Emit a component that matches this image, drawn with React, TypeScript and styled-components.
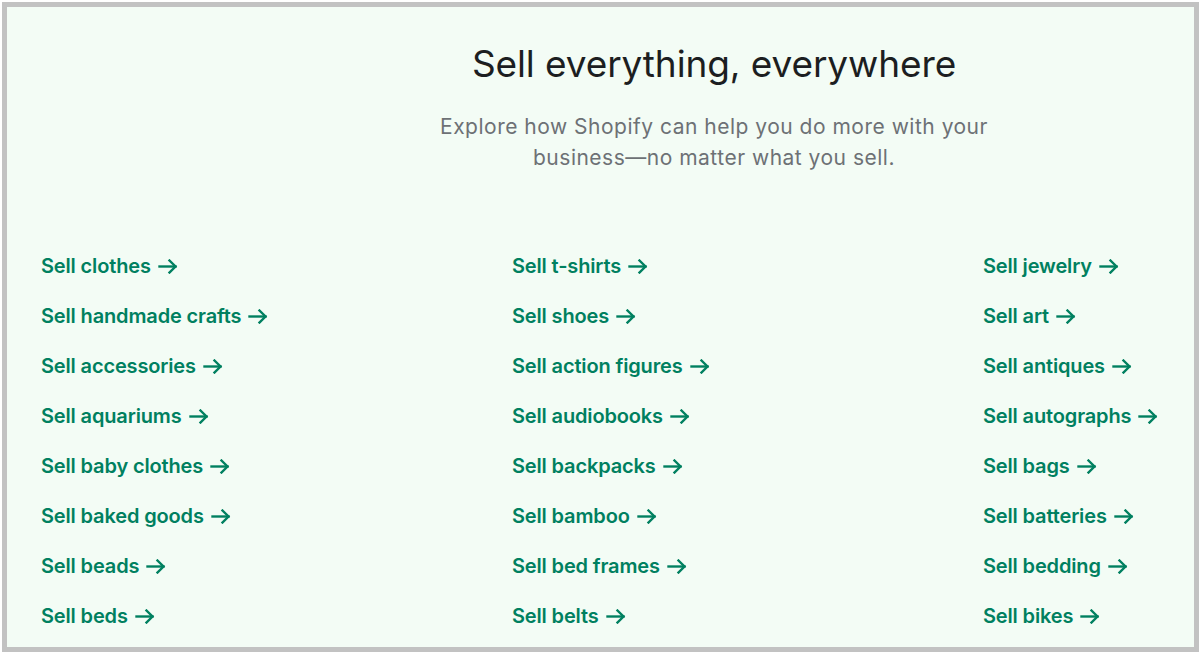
import styled, { createGlobalStyle } from "styled-components";

const GlobalStyle = createGlobalStyle`
    html, body {
        margin: 0;
        padding: 0;
        background: #ffffff;
    }
    body {
        padding: 2px 1px 1px 2px;
        font-family: Inter, "Noto Sans", "Liberation Sans", sans-serif;
    }
`

const columns: string[][] = [
    ['clothes', 'handmade crafts', 'accessories', 'aquariums', 'baby clothes', 'baked goods', 'beads', 'beds'],
    ['t-shirts', 'shoes', 'action figures', 'audiobooks', 'backpacks', 'bamboo', 'bed frames', 'belts'],
    ['jewelry', 'art', 'antiques', 'autographs', 'bags', 'batteries', 'bedding', 'bikes'],
]

const Frame = styled.div`
    box-sizing: border-box;
    height: 650px;
    border: 5px solid #c2c2c2;
    background: #f3fcf5;
    overflow: hidden;
`

const Header = styled.header`
    width: 580px;
    margin: 0 0 0 417px;
    padding-top: 35px;
    text-align: center;
`

const Title = styled.h2`
    margin: 0;
    font-size: 37px;
    line-height: 44px;
    font-weight: 400;
    color: #1c1e21;
    letter-spacing: -0.1px;
`

const Subtitle = styled.p`
    margin: 25px auto 0;
    max-width: 560px;
    font-size: 21px;
    line-height: 31px;
    font-weight: 400;
    letter-spacing: 0.5px;
    color: #6d7175;
`

const LinkGrid = styled.div`
    display: grid;
    grid-template-columns: 471px 471px 1fr;
    padding: 79px 0 0 34px;
`

const Column = styled.ul`
    display: flex;
    flex-direction: column;
    gap: 22px;
    margin: 0;
    padding: 0;
    list-style: none;
`

const LinkItem = styled.a`
    display: inline-flex;
    align-items: center;
    gap: 7px;
    font-size: 20px;
    line-height: 28px;
    font-weight: 600;
    letter-spacing: -0.15px;
    color: #008060;
    text-decoration: none;
    cursor: pointer;
`

const Arrow = () => (
    <svg width="20" height="15" viewBox="0 0 20 15" fill="none" stroke="currentColor" strokeWidth="2.4" strokeLinecap="square">
        <path d="M1.5 7.5 H17.5" />
        <path d="M11.5 1.5 L17.5 7.5 L11.5 13.5" strokeLinejoin="miter" />
    </svg>
)

const App = () => {
    return <>
        <GlobalStyle />
        <Frame>
            <Header>
                <Title>Sell everything, everywhere</Title>
                <Subtitle>Explore how Shopify can help you do more with your business—no matter what you sell.</Subtitle>
            </Header>
            <LinkGrid>
                { columns.map((items, i) => (
                    <Column key={ i }>
                        { items.map(item => (
                            <li key={ item }>
                                <LinkItem>Sell { item }<Arrow /></LinkItem>
                            </li>
                        )) }
                    </Column>
                )) }
            </LinkGrid>
        </Frame>
    </>
}

export default App
